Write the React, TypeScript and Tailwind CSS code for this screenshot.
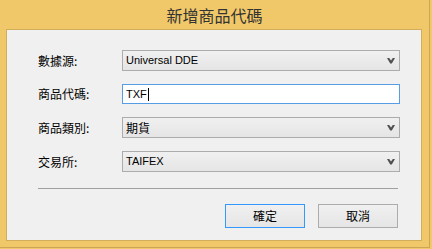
import React from "react";

const cjk = { fontFamily: '"Noto Sans CJK TC", "Liberation Sans", sans-serif' };
const lat = { fontFamily: '"Liberation Sans", "Noto Sans CJK TC", sans-serif' };

function Chevron() {
  return (
    <svg width="8" height="6" viewBox="0 0 8 6" className="shrink-0">
      <polygon points="0,0 2.2,0 4,2.6 5.8,0 8,0 4.8,5.5 3.2,5.5" fill="#505050" />
    </svg>
  );
}

function Select({ children }: { children: React.ReactNode }) {
  return (
    <div className="flex h-[21px] w-[278px] items-center justify-between border border-[#acacac] bg-gradient-to-b from-[#f0f0f0] to-[#e5e5e5] pl-[3px] pr-[4px]">
      <div className="flex items-center">{children}</div>
      <Chevron />
    </div>
  );
}

function Row({ label, children, mt }: { label: string; children: React.ReactNode; mt: string }) {
  return (
    <div className={`flex items-center ${mt}`}>
      <div className="w-[84px] text-[12px] leading-none text-black" style={cjk}>
        {label}
      </div>
      {children}
    </div>
  );
}

export default function App() {
  return (
    <div className="relative h-[249px] w-[432px] overflow-hidden bg-[#f0c869]">
      <div className="flex h-[248px] w-[430px] flex-col border-b border-r border-[#caa656]">
        <div className="flex h-[29px] items-center justify-center text-[16px] leading-none text-[#333]" style={cjk}>
          新增商品代碼
        </div>
        <div className="ml-[6px] h-[212px] w-[416px] border border-[#d2ad5a] bg-[#f0f0f0]">
          <div className="flex flex-col pl-[31px]">
            <Row label="數據源:" mt="mt-[20px]">
              <Select>
                <span className="text-[11px] leading-none text-black" style={lat}>
                  Universal DDE
                </span>
              </Select>
            </Row>
            <Row label="商品代碼:" mt="mt-[13px]">
              <div className="flex h-[20px] w-[278px] items-center border border-[#569de5] bg-white pl-[3px]">
                <span className="text-[11px] leading-none text-black" style={lat}>
                  TXF
                </span>
                <span className="ml-px h-[13px] w-px bg-black" />
              </div>
            </Row>
            <Row label="商品類別:" mt="mt-[13px]">
              <Select>
                <span className="text-[12px] leading-none text-black" style={cjk}>
                  期貨
                </span>
              </Select>
            </Row>
            <Row label="交易所:" mt="mt-[13px]">
              <Select>
                <span className="text-[11px] leading-none text-black" style={lat}>
                  TAIFEX
                </span>
              </Select>
            </Row>
            <div className="mt-[16px] h-px w-[360px] bg-[#a0a0a0]" />
            <div className="mt-[15px] flex w-[360px] justify-end gap-[13px]">
              <button
                className="flex h-[24px] w-[80px] items-center justify-center border border-[#3399ff] bg-gradient-to-b from-[#f0f0f0] to-[#e5e5e5] text-[12px] leading-none text-black"
                style={cjk}
              >
                確定
              </button>
              <button
                className="flex h-[24px] w-[80px] items-center justify-center border border-[#acacac] bg-gradient-to-b from-[#f0f0f0] to-[#e5e5e5] text-[12px] leading-none text-black"
                style={cjk}
              >
                取消
              </button>
            </div>
          </div>
        </div>
      </div>
    </div>
  );
}
